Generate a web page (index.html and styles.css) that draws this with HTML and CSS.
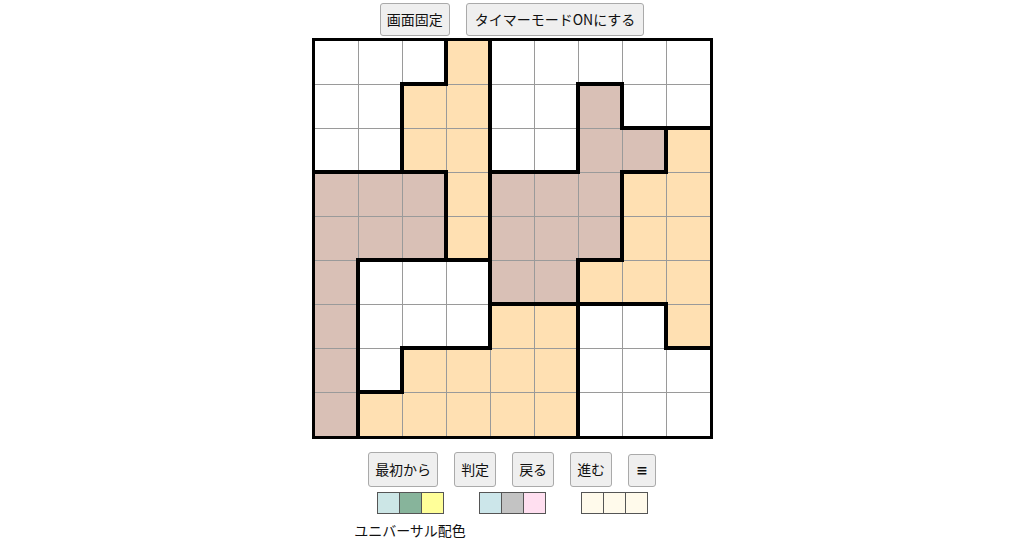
FILE: index.html
```html
<!DOCTYPE html>
<html lang="ja">
<head>
<meta charset="utf-8">
<title>パズル</title>
<link rel="stylesheet" href="styles.css">
</head>
<body>
<div class="page">
  <div class="toolbar top">
    <button class="btn">画面固定</button>
    <button class="btn wide">タイマーモードONにする</button>
  </div>

  <div class="board">
    <!-- row 0 -->
    <div class="cell white"></div>
    <div class="cell white"></div>
    <div class="cell white er eb"></div>
    <div class="cell orange er"></div>
    <div class="cell white"></div>
    <div class="cell white"></div>
    <div class="cell white eb"></div>
    <div class="cell white"></div>
    <div class="cell white"></div>
    <!-- row 1 -->
    <div class="cell white"></div>
    <div class="cell white er"></div>
    <div class="cell orange"></div>
    <div class="cell orange er"></div>
    <div class="cell white"></div>
    <div class="cell white er"></div>
    <div class="cell brown er"></div>
    <div class="cell white eb"></div>
    <div class="cell white eb"></div>
    <!-- row 2 -->
    <div class="cell white eb"></div>
    <div class="cell white er eb"></div>
    <div class="cell orange eb"></div>
    <div class="cell orange er"></div>
    <div class="cell white eb"></div>
    <div class="cell white er eb"></div>
    <div class="cell brown"></div>
    <div class="cell brown er eb"></div>
    <div class="cell orange"></div>
    <!-- row 3 -->
    <div class="cell brown"></div>
    <div class="cell brown"></div>
    <div class="cell brown er"></div>
    <div class="cell orange er"></div>
    <div class="cell brown"></div>
    <div class="cell brown"></div>
    <div class="cell brown er"></div>
    <div class="cell orange"></div>
    <div class="cell orange"></div>
    <!-- row 4 -->
    <div class="cell brown"></div>
    <div class="cell brown eb"></div>
    <div class="cell brown er eb"></div>
    <div class="cell orange er eb"></div>
    <div class="cell brown"></div>
    <div class="cell brown"></div>
    <div class="cell brown er eb"></div>
    <div class="cell orange"></div>
    <div class="cell orange"></div>
    <!-- row 5 -->
    <div class="cell brown er"></div>
    <div class="cell white"></div>
    <div class="cell white"></div>
    <div class="cell white er"></div>
    <div class="cell brown eb"></div>
    <div class="cell brown er eb"></div>
    <div class="cell orange eb"></div>
    <div class="cell orange eb"></div>
    <div class="cell orange"></div>
    <!-- row 6 -->
    <div class="cell brown er"></div>
    <div class="cell white"></div>
    <div class="cell white eb"></div>
    <div class="cell white er eb"></div>
    <div class="cell orange"></div>
    <div class="cell orange er"></div>
    <div class="cell white"></div>
    <div class="cell white er"></div>
    <div class="cell orange eb"></div>
    <!-- row 7 -->
    <div class="cell brown er"></div>
    <div class="cell white er eb"></div>
    <div class="cell orange"></div>
    <div class="cell orange"></div>
    <div class="cell orange"></div>
    <div class="cell orange er"></div>
    <div class="cell white"></div>
    <div class="cell white"></div>
    <div class="cell white"></div>
    <!-- row 8 -->
    <div class="cell brown er"></div>
    <div class="cell orange"></div>
    <div class="cell orange"></div>
    <div class="cell orange"></div>
    <div class="cell orange"></div>
    <div class="cell orange er"></div>
    <div class="cell white"></div>
    <div class="cell white"></div>
    <div class="cell white"></div>
  </div>

  <div class="toolbar bottom">
    <button class="btn">最初から</button>
    <button class="btn">判定</button>
    <button class="btn">戻る</button>
    <button class="btn">進む</button>
    <button class="btn menu">≡</button>
  </div>

  <div class="palettes">
    <div class="group">
      <div class="swatches">
        <span class="sw p1a"></span><span class="sw p1b"></span><span class="sw p1c"></span>
      </div>
      <div class="label">ユニバーサル配色</div>
    </div>
    <div class="group">
      <div class="swatches">
        <span class="sw p2a"></span><span class="sw p2b"></span><span class="sw p2c"></span>
      </div>
    </div>
    <div class="group">
      <div class="swatches">
        <span class="sw p3"></span><span class="sw p3"></span><span class="sw p3"></span>
      </div>
    </div>
  </div>
</div>
</body>
</html>
```

FILE: styles.css
```css
html, body {
  margin: 0;
  background: #ffffff;
  font-family: "Noto Sans CJK JP", "Noto Sans", sans-serif;
  color: #111;
}

.page {
  display: flex;
  flex-direction: column;
  align-items: center;
  padding-top: 3px;
}

.toolbar {
  display: flex;
  align-items: flex-end;
}

.toolbar.top {
  gap: 16px;
  margin-bottom: 2px;
}

.toolbar.bottom {
  gap: 16px;
  margin-top: 13px;
}

.btn {
  font-family: "Noto Sans CJK JP", "Noto Sans", sans-serif;
  font-size: 14px;
  line-height: 19px;
  padding: 6px 6px;
  border: 1px solid #aaaaaa;
  border-radius: 3px;
  background: #efefef;
  color: #111;
  margin: 0;
}

.btn.wide {
  padding: 6px 8px;
}

.toolbar.bottom .btn {
  padding: 7px 6px;
}

.toolbar.bottom .btn.menu {
  padding: 6px 7px;
  font-weight: bold;
  font-family: "DejaVu Sans", sans-serif;
}

.board {
  display: grid;
  grid-template-columns: repeat(9, 43px);
  grid-auto-rows: 43px;
  gap: 1px;
  background: #9a9a9a;
  border: 3px solid #000;
}

.cell {
  position: relative;
}

.white { background: #ffffff; }
.orange { background: #ffe0b2; }
.brown { background: #d9c0b6; }

.er::before {
  content: "";
  position: absolute;
  top: -3px;
  bottom: -2px;
  right: -2px;
  width: 4px;
  background: #000;
  z-index: 1;
}

.eb::after {
  content: "";
  position: absolute;
  left: -3px;
  right: -2px;
  bottom: -2px;
  height: 4px;
  background: #000;
  z-index: 1;
}

.palettes {
  display: flex;
  gap: 35px;
  margin-top: 5px;
}

.group {
  width: 67px;
  display: flex;
  flex-direction: column;
  align-items: center;
}

.swatches {
  display: flex;
  border: 1px solid #555;
}

.sw {
  width: 21px;
  height: 20px;
  border-left: 1px solid #555;
}

.sw:first-child {
  border-left: none;
}

.p1a { background: #cce6e6; }
.p1b { background: #87b49b; }
.p1c { background: #ffff99; }
.p2a { background: #cce6ea; }
.p2b { background: #c3c3c3; }
.p2c { background: #ffdff0; }
.p3 { background: #fffaeb; }

.label {
  margin-top: 6px;
  font-size: 14px;
  line-height: 20px;
  white-space: nowrap;
  color: #111;
}
```
